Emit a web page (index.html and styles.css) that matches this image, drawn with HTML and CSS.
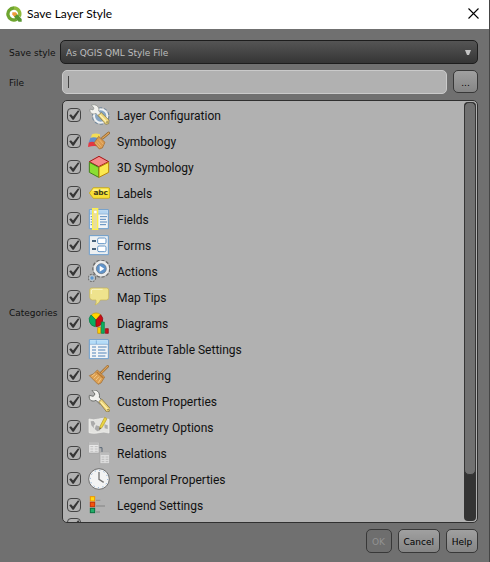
FILE: index.html
```html
<!DOCTYPE html>
<html lang="en">
<head>
<meta charset="utf-8">
<title>Save Layer Style</title>
<link rel="stylesheet" href="styles.css">
</head>
<body>
<main class="dialog">
  <header class="titlebar">
    <svg class="logo" viewBox="0 0 48 48" aria-hidden="true">
      <path d="M24 6a18 18 0 1 0 8 34" fill="none" stroke="#6ea52f" stroke-width="10"/>
      <path d="M24 6a18 18 0 0 1 16 25" fill="none" stroke="#8fba3c" stroke-width="10"/>
      <path d="M24 24h9l14 15v8h-9L24 32z" fill="#589632"/>
      <path d="M19 19h10l5 5-9 8-6-6z" fill="#ee9a3a"/>
    </svg>
    <h1 class="title">Save Layer Style</h1>
    <button class="close" type="button" aria-label="Close">
      <svg viewBox="0 0 11 11" aria-hidden="true"><path d="M.5.5l10 10M10.500.5l-10 10" stroke="#000" stroke-width="1.1"/></svg>
    </button>
  </header>
  <form class="form">
    <label class="label" for="style">Save style</label>
    <div class="combo">
      <select id="style" class="select"><option>As QGIS QML Style File</option></select>
      <svg class="arrow" viewBox="0 0 8 7" aria-hidden="true"><path d="M1 1h6L5 6H3z" fill="#c4c4c4"/></svg>
    </div>
    <label class="label" for="file">File</label>
    <div class="file">
      <div class="field"><span class="caret"></span><input id="file" class="input" type="text"></div>
      <button class="button browse" type="button">...</button>
    </div>
    <span class="label" id="categories">Categories</span>
    <div class="panel" role="group" aria-labelledby="categories">
      <ul class="list">
        <li><label class="row"><input class="check" type="checkbox" checked>
          <svg class="icon" viewBox="0 0 66 66"><circle cx="38" cy="36" r="22" fill="none" stroke="#75899c" stroke-width="9" stroke-dasharray="9 5"/><circle cx="38" cy="36" r="20" fill="#87a5c2" stroke="#eef1f3" stroke-width="6"/><path d="M10 3l8 9-3 6-9-3c-2 12 8 18 18 13l7 9 9-8-8-8C35 9 25-1 10 3z" fill="#f2f2ee" stroke="#858985" stroke-width="2"/><path d="M30 34l10-8 23 22-1 11-9 2z" fill="#ecd57c" stroke="#82733d" stroke-width="2"/><path d="M36 34l20 20" stroke="#fff3b5" stroke-width="4"/><circle cx="57" cy="54" r="2" fill="#4f4930"/></svg>
          <span>Layer Configuration</span></label></li>
        <li><label class="row"><input class="check" type="checkbox" checked>
          <svg class="icon" viewBox="0 0 66 66"><path d="M12 13q11-5 24 0v12L21 38 7 28z" fill="#f3dc55"/><path d="M7 24q10-5 24 1L20 39 2 38z" fill="#628dcc"/><path d="M2 38q9-5 20-1l8 12q-15-3-30 2z" fill="#e43742"/><path d="M44 24L62 9" stroke="#8c602a" stroke-width="8" stroke-linecap="round"/><path d="M44 24L62 9" stroke="#dfa55b" stroke-width="4" stroke-linecap="round"/><path d="M32 19l19 18-8 17-9 3-16-18z" fill="#d99a50" stroke="#9e682c" stroke-width="2"/><path d="M27 34l13 16M34 29l12 14M22 38l13 15" stroke="#f0c180" stroke-width="2"/></svg>
          <span>Symbology</span></label></li>
        <li><label class="row"><input class="check" type="checkbox" checked>
          <svg class="icon" viewBox="0 0 66 66"><path d="M33 1l29 16-30 15L4 17z" fill="#f58b8b" stroke="#a61212" stroke-width="3" stroke-linejoin="round"/><path d="M4 19l28 15v30L4 49z" fill="#8ade32" stroke="#43801b" stroke-width="3" stroke-linejoin="round"/><path d="M62 19L33 34v30l29-15z" fill="#fce94f" stroke="#b9860a" stroke-width="3" stroke-linejoin="round"/></svg>
          <span>3D Symbology</span></label></li>
        <li><label class="row"><input class="check" type="checkbox" checked>
          <svg class="icon" viewBox="0 0 66 66"><path d="M4 33l12-16h45q4 0 4 4v24q0 4-4 4H16z" fill="#f7df35" stroke="#c4a000" stroke-width="2"/><path d="M17 20h43v7H12z" fill="#fff17b"/><text x="38" y="40" text-anchor="middle" class="abc">abc</text></svg>
          <span>Labels</span></label></li>
        <li><label class="row"><input class="check" type="checkbox" checked>
          <svg class="icon" viewBox="0 0 66 66"><path d="M4 5h57v57H4z" fill="#f1f4f6" stroke="#6b9dcc" stroke-width="3"/><path d="M6 7h53v10H6z" fill="#b4d5f1"/><path d="M5 18h56" stroke="#6b9dcc" stroke-width="2"/><path d="M8 26h8M8 34h8M8 42h8M8 50h8M36 26h21M36 34h18M36 42h21M36 50h18" stroke="#588abd" stroke-width="3"/><path d="M14 2h15v62H14z" fill="#e8dda1" stroke="#fcf04c" stroke-width="4"/><circle cx="22" cy="12" r="4" fill="#fff"/></svg>
          <span>Fields</span></label></li>
        <li><label class="row"><input class="check" type="checkbox" checked>
          <svg class="icon" viewBox="0 0 66 66"><path d="M4 5h57v57H4z" fill="#edf0f2" stroke="#6b9dcc" stroke-width="3"/><path d="M12 21h12M12 45h12" stroke="#47627b" stroke-width="6"/><rect x="29" y="12" width="25" height="17" rx="4" fill="#fff" stroke="#6294c5" stroke-width="3"/><rect x="29" y="36" width="25" height="17" rx="4" fill="#fff" stroke="#6294c5" stroke-width="3"/></svg>
          <span>Forms</span></label></li>
        <li><label class="row"><input class="check" type="checkbox" checked>
          <svg class="icon" viewBox="0 0 66 66"><circle cx="40" cy="26" r="24" fill="none" stroke="#6c6c6c" stroke-width="7" stroke-dasharray="9 5"/><circle cx="40" cy="26" r="19" fill="#4d82bd" stroke="#ececec" stroke-width="9"/><circle cx="40" cy="26" r="15" fill="#5f93cb" stroke="#737b84" stroke-width="2"/><path d="M35 17v18l14-9z" fill="#fff"/><circle cx="12" cy="54" r="10" fill="none" stroke="#707070" stroke-width="5" stroke-dasharray="5 3"/><circle cx="12" cy="54" r="7" fill="#5e98d1" stroke="#bac5ce" stroke-width="4"/></svg>
          <span>Actions</span></label></li>
        <li><label class="row"><input class="check" type="checkbox" checked>
          <svg class="icon" viewBox="0 0 66 66"><path d="M11 6h45q6 0 6 6v22q0 8-7 8H37Q34 53 21 57q5-6 3-15H13q-7 0-8-8V12q0-6 6-6z" fill="#eee38d" stroke="#c6b252" stroke-width="2"/><path d="M10 24V15q0-5 6-5h28" fill="none" stroke="#fbf5c7" stroke-width="3"/></svg>
          <span>Map Tips</span></label></li>
        <li><label class="row"><input class="check" type="checkbox" checked>
          <svg class="icon" viewBox="0 0 66 66"><path d="M24 24L10 9a20 20 0 0 1 28-1z" fill="#ffd500" stroke="#c49b00" stroke-width="2"/><path d="M24 24L9 9a21 21 0 0 0 13 35z" fill="#08ae61" stroke="#087842" stroke-width="2"/><path d="M24 24L38 8a21 21 0 0 1-14 36z" fill="#c90d14" stroke="#850710" stroke-width="2"/><path d="M29 46h9v18h-9z" fill="#ffd500" stroke="#c78800" stroke-width="2"/><path d="M40 30h9v34h-9z" fill="#08b35d" stroke="#087842" stroke-width="2"/><path d="M52 50h9v14h-9z" fill="#c91118" stroke="#850710" stroke-width="2"/></svg>
          <span>Diagrams</span></label></li>
        <li><label class="row"><input class="check" type="checkbox" checked>
          <svg class="icon" viewBox="0 0 66 66"><path d="M4 5h57v57H4z" fill="#f1f4f6" stroke="#6b9dcc" stroke-width="3"/><path d="M6 7h53v11H6z" fill="#b4dcf8"/><path d="M5 19h56M25 7v11" stroke="#6b9dcc" stroke-width="2"/><path d="M12 27h12M12 36h12M12 45h12M12 54h12M30 27h26M30 36h22M30 45h26M30 54h22" stroke="#5084ba" stroke-width="3"/></svg>
          <span>Attribute Table Settings</span></label></li>
        <li><label class="row"><input class="check" type="checkbox" checked>
          <svg class="icon" viewBox="0 0 66 66"><path d="M40 26L59 7" stroke="#92642b" stroke-width="8" stroke-linecap="round"/><path d="M40 26L59 7" stroke="#dba15a" stroke-width="4" stroke-linecap="round"/><path d="M28 18l22 21-11 18-9 4L4 35l12-5z" fill="#dda052" stroke="#9d682d" stroke-width="2"/><path d="M26 24l20 18" stroke="#b57734" stroke-width="4"/><path d="M21 29L11 37M27 33L17 43M33 38l-9 10M39 43l-8 13" stroke="#f4c785" stroke-width="3"/></svg>
          <span>Rendering</span></label></li>
        <li><label class="row"><input class="check" type="checkbox" checked>
          <svg class="icon" viewBox="0 0 66 66"><path d="M12 1l9 11-5 7-12-3c-3 14 8 21 20 15l12 12 9-9-11-12C37 7 26-3 12 1z" fill="#f2f2ef" stroke="#6b6e6b" stroke-width="3"/><path d="M32 35l9-8 26 29-3 8-8 2z" fill="#e9d077" stroke="#7b6a35" stroke-width="2"/><path d="M38 36l22 23" stroke="#fff0a4" stroke-width="4"/><circle cx="60" cy="59" r="2" fill="#544c31"/></svg>
          <span>Custom Properties</span></label></li>
        <li><label class="row"><input class="check" type="checkbox" checked>
          <svg class="icon" viewBox="0 0 66 66"><path d="M3 9q14 5 29 0t31 1v41q-15-5-30-1T3 50z" fill="#e3e3e0" stroke="#f4f4f1" stroke-width="2"/><path d="M8 16l9-1 5 8-5 6 1 8-8-9zM24 28l10 3 2 12-8 3-8-7zM49 25l10 3v11l-9-2z" fill="#aaa"/><path d="M36 31L50 4l7 4-15 27-7 5z" fill="#ead442" stroke="#b39b28" stroke-width="2"/><path d="M35 34l4 3-5 4z" fill="#555"/></svg>
          <span>Geometry Options</span></label></li>
        <li><label class="row"><input class="check" type="checkbox" checked>
          <svg class="icon" viewBox="0 0 66 66"><path d="M34 17h8v16" fill="none" stroke="#576575" stroke-width="3"/><rect x="2" y="1" width="31" height="32" rx="2" fill="#e8e8e8" stroke="#a0a0a0" stroke-width="2"/><path d="M3 2h29v7H3z" fill="#bcbcbc"/><path d="M7 14h9M20 14h9M7 21h9M20 21h9M7 28h9M20 28h9" stroke="#aaa" stroke-width="2"/><rect x="36" y="31" width="29" height="34" rx="2" fill="#dedede" stroke="#a0a0a0" stroke-width="2"/><path d="M37 32h27v7H37z" fill="#bcbcbc"/><path d="M41 45h8M53 45h8M41 52h8M53 52h8M41 59h8M53 59h8" stroke="#aaa" stroke-width="2"/></svg>
          <span>Relations</span></label></li>
        <li><label class="row"><input class="check" type="checkbox" checked>
          <svg class="icon" viewBox="0 0 66 66"><circle cx="33" cy="33" r="31" fill="#f3f4f4" stroke="#707070" stroke-width="3"/><circle cx="33" cy="33" r="26" fill="none" stroke="#6e9cc9" stroke-width="3" stroke-dasharray="3 10.600"/><path d="M33 12v22l14 9" fill="none" stroke="#777" stroke-width="4"/></svg>
          <span>Temporal Properties</span></label></li>
        <li><label class="row"><input class="check" type="checkbox" checked>
          <svg class="icon" viewBox="0 0 66 66"><rect x="7" y="8" width="13" height="13" fill="#ffdb12" stroke="#ef9400" stroke-width="3"/><rect x="7" y="25" width="13" height="13" fill="#f5540b" stroke="#c83205" stroke-width="3"/><rect x="7" y="43" width="13" height="13" fill="#20ae68" stroke="#08713e" stroke-width="3"/><path d="M24 19h13M24 36h27M24 54h12" stroke="#929292" stroke-width="4"/></svg>
          <span>Legend Settings</span></label></li>
        <li><label class="row row-short"><input class="check" type="checkbox" checked aria-label="Category"></label></li>
      </ul>
      <div class="scrollbar"><div class="thumb"></div></div>
    </div>
  </form>
  <footer class="actions">
    <button class="button ok" type="button" disabled>OK</button>
    <button class="button" type="button">Cancel</button>
    <button class="button help" type="button">Help</button>
  </footer>
</main>
</body>
</html>
```

FILE: styles.css
```css
* { box-sizing: border-box; }

body {
  margin: 0;
  font: 9px/12px "DejaVu Sans", sans-serif;
  color: #101010;
}

.dialog {
  display: flex;
  flex-direction: column;
  height: 100vh;
  background: #707070;
  border-right: 1px solid #454545;
}

.titlebar {
  display: flex;
  align-items: center;
  flex: none;
  height: 29px;
  padding: 0 10px 2px 6px;
  background: #fff;
}

.logo { width: 16px; height: 16px; }

.title {
  flex: 1;
  margin: 0 0 0 5px;
  font: 400 12px/16px Lato, sans-serif;
  color: #000;
}

.close {
  display: flex;
  padding: 0;
  border: 0;
  background: none;
}

.close svg { width: 11px; height: 11px; }

.form {
  flex: 1;
  min-height: 0;
  display: grid;
  grid-template-columns: 47px minmax(0, 1fr);
  grid-template-rows: 24px 24px minmax(0, 1fr);
  gap: 6px;
  align-items: center;
  padding: 11px 11px 0 9px;
}

.label { padding-top: 2px; white-space: nowrap; }

.combo {
  position: relative;
  height: 24px;
  margin-left: -2px;
}

.select {
  appearance: none;
  display: block;
  width: 100%;
  height: 100%;
  padding: 2px 20px 0 5px;
  border: 1px solid #1d1d1d;
  border-radius: 5px;
  background: linear-gradient(#555, #353535);
  color: #bdbdbd;
  font: inherit;
}

.arrow {
  position: absolute;
  right: 6px;
  top: 9px;
  width: 8px;
  height: 7px;
}

.file { display: flex; gap: 6px; align-items: flex-start; }

.field {
  flex: 1;
  display: flex;
  align-items: center;
  height: 24px;
  padding: 0 5px;
  border: 1px solid #cacaca;
  border-radius: 5px;
  background: #b1b1b1;
}

.caret { width: 1px; height: 12px; background: #444; }

.input {
  flex: 1;
  min-width: 0;
  padding: 0;
  border: 0;
  outline: 0;
  background: none;
  font: inherit;
}

.button {
  height: 24px;
  padding: 2px 5px 0;
  border: 1px solid #383838;
  border-radius: 5px;
  background: linear-gradient(#a0a0a0, #858585);
  color: #000;
  font: inherit;
}

.browse { width: 25px; height: 23px; }

.panel {
  display: flex;
  height: 100%;
  padding: 1px;
  border: 1px solid #303030;
  border-radius: 5px;
  background: #b1b1b1;
  overflow: hidden;
}

.list {
  flex: 1;
  margin: 0;
  padding: 0;
  list-style: none;
  font: 12px/16px Roboto, sans-serif;
}

.row {
  display: flex;
  align-items: center;
  height: 26px;
  padding-left: 3px;
}

.row span { margin-left: 7px; padding-top: 2px; }

.row-short { height: 14px; }

.check {
  appearance: none;
  display: block;
  width: 14px;
  height: 14px;
  margin: 0 7px 0 0;
  border: 1px solid #444;
  border-radius: 4px;
}

.check:checked::before {
  content: "";
  display: block;
  width: 12px;
  height: 12px;
  background: #353535;
  clip-path: polygon(10% 52%, 25% 43%, 42% 62%, 84% 10%, 94% 18%, 48% 90%, 38% 90%);
}

.icon { flex: none; width: 22px; height: 22px; }

.abc { font: 700 22px "DejaVu Sans", sans-serif; fill: #3c3a20; }

.scrollbar {
  width: 12px;
  border-radius: 4px;
  background: #343434;
}

.thumb {
  height: 89%;
  border: 1px solid #363636;
  border-radius: 5px;
  background: #717171;
}

.actions {
  display: flex;
  flex: none;
  justify-content: flex-end;
  gap: 6px;
  padding: 6px 11px 9px;
}

.ok { width: 26px; }

.help { width: 32px; padding-inline: 0; }

.button:disabled {
  background: #6e6e6e;
  color: #929292;
}
```
